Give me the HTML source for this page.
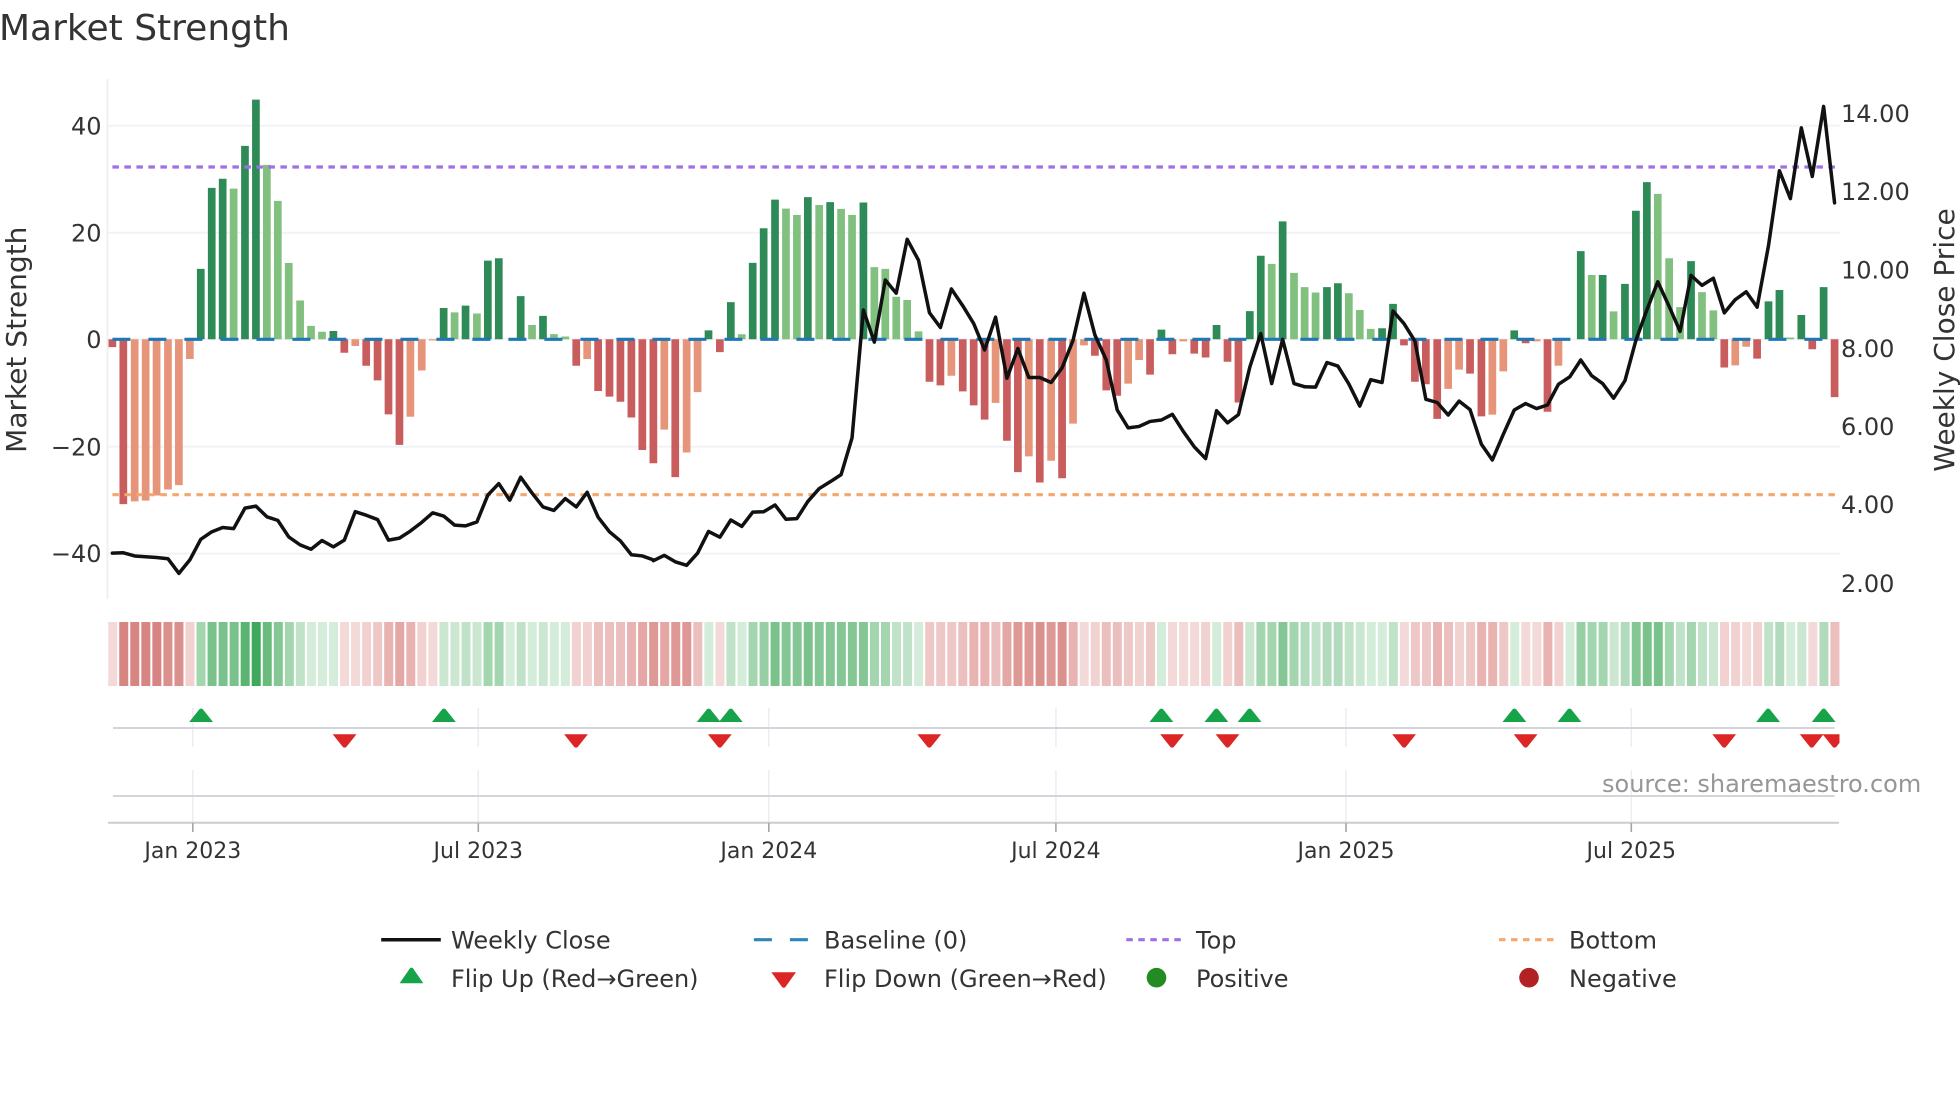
<!DOCTYPE html>
<html><head><meta charset="utf-8"><title>Market Strength</title>
<style>html,body{margin:0;padding:0;background:#fff;width:1960px;height:1102px;overflow:hidden}svg{display:block}text{font-family:"DejaVu Sans","Liberation Sans",sans-serif;fill:#333}</style>
</head><body>
<svg width="1960" height="1102" viewBox="0 0 1960 1102" xmlns="http://www.w3.org/2000/svg">
<defs>
<clipPath id="c"><rect x="100" y="600" width="1739.5" height="200"/></clipPath>
<path id="u" d="M-11.9 13.3L-1.7.6Q0-.7 1.7.6L11.9 13.3z" fill="#16a34a"/>
<path id="d" d="M-11.9 0L-1.7 12.7Q0 14 1.7 12.7L11.9 0z" fill="#dc2626"/>
</defs>
<rect width="1960" height="1102" fill="#fff"/>
<text x="-1" y="40" font-size="36">Market Strength</text>

<!-- grid -->
<g stroke="#f1f3f8" stroke-width="2" fill="none">
<path d="M107.5 125.7H1840M107.5 232.7H1840M107.5 446.7H1840M107.5 553.6H1840M107.5 339.3H1840"/>
<path d="M107.5 79V599" stroke="#eef0f4"/>
</g>
<g stroke="#eceef4" stroke-width="1.6" fill="none">
<path d="M192.8 708V747M192.8 770V823M478.3 708V747M478.3 770V823M768.8 708V747M768.8 770V823M1055.9 708V747M1055.9 770V823M1346 708V747M1346 770V823M1631.3 708V747M1631.3 770V823"/>
</g>

<!-- bars -->
<g fill="none" stroke-width="18.3">
<g transform="scale(.42092,.39541)">
<path stroke="#2e8b57" d="M477 858V680M503 858V475M529 858V452M582 858V369M608 858V252M792 858V837M1054 858V779M1106 858V773M1159 858V659M1185 858V653M1237 858V749M1290 858V799"/>
<path stroke="#81c07f" d="M555 858V477M634 858V417M660 858V508M686 858V665M713 858V760M739 858V824M765 858V839M1080 858V790M1133 858V793M1264 858V822M1316 858V845M1343 858V851"/>
<path stroke="#c95c5c" d="M267 858V878M293 858V1275M818 858V892M870 858V925M897 858V962M923 858V1048M949 858V1125M1369 858V925M1421 858V989M1448 858V1003M1474 858V1016M1500 858V1056M1526 858V1138"/>
<path stroke="#e6957a" d="M320 858V1268M346 858V1266M372 858V1253M399 858V1238M425 858V1227M451 858V908M844 858V875M975 858V1054M1002 858V937M1028 858V861M1395 858V908"/>
</g>
<g transform="translate(650,60) scale(.42092,.35714)">
<path stroke="#2e8b57" d="M139 782V757M192 782V678M244 782V568M270 782V471M297 782V391M375 782V384M428 782V398M507 782V399M1215 782V755M1346 782V742M1425 782V703M1451 782V548M1503 782V452"/>
<path stroke="#81c07f" d="M218 782V768M323 782V416M349 782V434M402 782V406M454 782V417M480 782V434M533 782V580M559 782V585M585 782V663M611 782V672M638 782V760M1477 782V571M1530 782V596"/>
<path stroke="#c95c5c" d="M8 782V1129M60 782V1168M166 782V818M664 782V901M690 782V911M743 782V928M769 782V967M795 782V1007M848 782V1066M874 782V1154M926 782V1183M979 782V1171M1057 782V828M1084 782V925M1110 782V940M1188 782V881M1241 782V824M1293 782V822M1320 782V833M1372 782V845M1398 782V959"/>
<path stroke="#e6957a" d="M34 782V1035M87 782V1099M113 782V930M716 782V884M821 782V960M900 782V1110M953 782V1122M1005 782V1018M1031 782V799M1136 782V906M1162 782V840M1267 782V788"/>
</g>
<g transform="translate(1300,60) scale(.42092,.35714)">
<path stroke="#2e8b57" d="M64 782V636M90 782V625M195 782V751M221 782V683M509 782V757M667 782V535M719 782V602M772 782V627M798 782V422M824 782V342M929 782V563M1113 782V676M1139 782V644M1191 782V714M1244 782V636"/>
<path stroke="#81c07f" d="M11 782V636M37 782V651M116 782V653M142 782V700M168 782V753M693 782V602M745 782V704M850 782V375M877 782V555M903 782V692M955 782V650M982 782V701M1165 782V777"/>
<path stroke="#c95c5c" d="M247 782V799M273 782V901M299 782V908M326 782V1005M404 782V878M431 782V998M536 782V793M588 782V985M1008 782V861M1086 782V836M1217 782V810M1270 782V944"/>
<path stroke="#e6957a" d="M352 782V921M378 782V867M457 782V993M483 782V872M562 782V788M614 782V856M1034 782V855M1060 782V803"/>
</g>
</g>

<!-- reference lines -->
<path d="M112.4 339.3H1835" stroke="#1f77b4" stroke-width="3.2" stroke-dasharray="18 18" fill="none"/>
<path d="M112.4 167H1835" stroke="#a06ee6" stroke-width="3.2" stroke-dasharray="6.5 5.5" fill="none"/>
<path d="M112.4 494.7H1835" stroke="#f4a86e" stroke-width="3.2" stroke-dasharray="6.5 5.5" fill="none"/>

<!-- weekly close line -->
<g fill="none" stroke="#111" stroke-width="3.5" stroke-linejoin="round" stroke-linecap="round">
<path vector-effect="non-scaling-stroke" transform="scale(.42092,.39541)" d="M267 1399L293 1398L320 1406L346 1408L372 1410L399 1413L425 1450L451 1416L477 1364L503 1345L529 1334L555 1337L582 1285L608 1280L634 1307L660 1316L686 1358L713 1378L739 1389L765 1367L792 1383L818 1366L844 1294L870 1303L897 1314L923 1366L949 1361L975 1343L1002 1321L1028 1297L1054 1305L1080 1328L1106 1330L1133 1320L1159 1252L1185 1223L1211 1265L1237 1207L1264 1247L1290 1282L1316 1291L1343 1261L1369 1282L1395 1245L1421 1308L1448 1345L1474 1368L1500 1403L1526 1406L1552 1416"/>
<path vector-effect="non-scaling-stroke" transform="translate(650,60) scale(.42092,.35714)" d="M8 1402L34 1387L60 1405L87 1415L113 1381L139 1320L166 1336L192 1288L218 1306L244 1266L270 1265L297 1246L323 1286L349 1284L375 1236L402 1200L428 1181L454 1161L480 1058L507 700L533 790L559 616L585 653L611 502L638 561L664 708L690 749L716 641L743 688L769 738L795 812L821 720L848 891L874 808L900 889L926 889L953 903L979 862L1005 785L1031 653L1057 770L1084 840L1110 980L1136 1030L1162 1026L1188 1012L1215 1008L1241 992L1267 1040L1293 1083L1320 1116L1346 982L1372 1016L1398 993L1425 860L1451 766L1477 906L1503 782L1530 906L1556 915"/>
<path vector-effect="non-scaling-stroke" transform="translate(1300,60) scale(.42092,.35714)" d="M11 915L37 916L64 847L90 857L116 907L142 969L168 895L195 903L221 703L247 738L273 787L299 950L326 959L352 994L378 955L404 979L431 1076L457 1120L483 1048L509 980L536 962L562 976L588 966L614 908L641 887L667 840L693 884L719 906L745 947L772 898L798 785L824 700L850 621L877 690L903 760L929 603L955 631L982 611L1008 708L1034 671L1060 649L1086 692L1113 520L1139 310L1165 388L1191 190L1217 326L1244 130L1270 400"/>
</g>

<!-- heat strip -->
<g transform="translate(112.7,0) scale(11.04,1)" stroke-width=".815" fill="none">
<path stroke="#d4ecda" d="M18 622v64M19 622v64M20 622v64M36 622v64M38 622v64M40 622v64M41 622v64M54 622v64M57 622v64M73 622v64M95 622v64M100 622v64M114 622v64M115 622v64M127 622v64M132 622v64M152 622v64"/>
<path stroke="#cbe7d2" d="M30 622v64M31 622v64M33 622v64M39 622v64M103 622v64M113 622v64M136 622v64M145 622v64M153 622v64"/>
<path stroke="#bfe2c8" d="M17 622v64M32 622v64M37 622v64M56 622v64M71 622v64M72 622v64M109 622v64M112 622v64M116 622v64M142 622v64M144 622v64M150 622v64"/>
<path stroke="#b2dbbd" d="M108 622v64M110 622v64M111 622v64M137 622v64M151 622v64M155 622v64"/>
<path stroke="#a3d5ae" d="M8 622v64M16 622v64M34 622v64M35 622v64M58 622v64M69 622v64M70 622v64M104 622v64M105 622v64M107 622v64M134 622v64M135 622v64M141 622v64M143 622v64"/>
<path stroke="#95cfa3" d="M59 622v64M133 622v64"/>
<path stroke="#84c795" d="M15 622v64M61 622v64M62 622v64M64 622v64M65 622v64M66 622v64M67 622v64M68 622v64M106 622v64M138 622v64"/>
<path stroke="#7ac28c" d="M9 622v64M10 622v64M11 622v64M60 622v64M63 622v64M139 622v64M140 622v64"/>
<path stroke="#6bbb7e" d="M14 622v64"/>
<path stroke="#5cb473" d="M12 622v64"/>
<path stroke="#3ea85b" d="M13 622v64"/>
<path stroke="#f4d9d9" d="M0 622v64M21 622v64M22 622v64M29 622v64M55 622v64M88 622v64M96 622v64M97 622v64M98 622v64M117 622v64M128 622v64M129 622v64M148 622v64M154 622v64"/>
<path stroke="#f2d1d1" d="M7 622v64M23 622v64M28 622v64M42 622v64M43 622v64M89 622v64M93 622v64M99 622v64M101 622v64M122 622v64M131 622v64M146 622v64M147 622v64M149 622v64"/>
<path stroke="#eec8c7" d="M24 622v64M74 622v64M75 622v64M76 622v64M92 622v64M94 622v64M118 622v64M119 622v64M123 622v64M126 622v64"/>
<path stroke="#ebbfbe" d="M44 622v64M45 622v64M46 622v64M53 622v64M77 622v64M80 622v64M90 622v64M91 622v64M102 622v64M121 622v64M156 622v64"/>
<path stroke="#e8b3b1" d="M25 622v64M27 622v64M47 622v64M78 622v64M79 622v64M87 622v64M120 622v64M124 622v64M125 622v64M130 622v64"/>
<path stroke="#e4a7a5" d="M26 622v64M48 622v64M50 622v64M81 622v64"/>
<path stroke="#de9996" d="M49 622v64M51 622v64M52 622v64M82 622v64M83 622v64M85 622v64"/>
<path stroke="#da908d" d="M5 622v64M6 622v64M84 622v64M86 622v64"/>
<path stroke="#d68583" d="M1 622v64M2 622v64M3 622v64M4 622v64"/>
</g>

<!-- flip rows -->
<path d="M113 728H1834.5M113 796H1834.5" stroke="#d3d5da" stroke-width="2" fill="none"/>
<path d="M108 822.7H1839" stroke="#ccc" stroke-width="2" fill="none"/>
<path d="M192.8 823V832M478.3 823V832M768.8 823V832M1055.9 823V832M1346 823V832M1631.3 823V832" stroke="#a5a5a5" stroke-width="1.6" fill="none"/>
<g clip-path="url(#c)">
<use href="#u" x="201.1" y="708.7"/><use href="#u" x="443.9" y="708.7"/><use href="#u" x="708.7" y="708.7"/><use href="#u" x="730.8" y="708.7"/><use href="#u" x="1161.4" y="708.7"/><use href="#u" x="1216.4" y="708.7"/><use href="#u" x="1249.6" y="708.7"/><use href="#u" x="1514.4" y="708.7"/><use href="#u" x="1569.5" y="708.7"/><use href="#u" x="1768.1" y="708.7"/><use href="#u" x="1823.7" y="708.7"/>
<use href="#d" x="344.6" y="734.3"/><use href="#d" x="576" y="734.3"/><use href="#d" x="719.8" y="734.3"/><use href="#d" x="929.3" y="734.3"/><use href="#d" x="1172.1" y="734.3"/><use href="#d" x="1227.5" y="734.3"/><use href="#d" x="1404.1" y="734.3"/><use href="#d" x="1525.6" y="734.3"/><use href="#d" x="1724.2" y="734.3"/><use href="#d" x="1811.7" y="734.3"/><use href="#d" x="1834.5" y="734.3"/>
</g>

<!-- axes text -->
<g font-size="24">
<g text-anchor="end">
<text x="101.5" y="134.4">40</text><text x="101.5" y="241.4">20</text><text x="101.5" y="348">0</text><text x="101.5" y="455.3">−20</text><text x="101.5" y="562.2">−40</text>
</g>
<text x="1841" y="121.8">14.00</text><text x="1841" y="199.8">12.00</text><text x="1841" y="278.6">10.00</text><text x="1841" y="356.8">8.00</text><text x="1841" y="435">6.00</text><text x="1841" y="513.2">4.00</text><text x="1841" y="592">2.00</text>
</g>
<text transform="translate(25.8,339.7) rotate(-90)" text-anchor="middle" font-size="28">Market Strength</text>
<text transform="translate(1954,340) rotate(-90)" text-anchor="middle" font-size="28">Weekly Close Price</text>
<g font-size="22" text-anchor="middle">
<text x="192.8" y="858">Jan 2023</text><text x="478.3" y="858">Jul 2023</text><text x="768.8" y="858">Jan 2024</text><text x="1055.9" y="858">Jul 2024</text><text x="1346" y="858">Jan 2025</text><text x="1631.3" y="858">Jul 2025</text>
</g>
<text x="1602" y="792" font-size="24" style="fill:#969696">source: sharemaestro.com</text>

<!-- legend -->
<path d="M381.2 939.7H440.8" stroke="#111" stroke-width="3.5" fill="none"/>
<path d="M753.9 939.7H808.2" stroke="#2f86bb" stroke-width="3.2" stroke-dasharray="18 18" fill="none"/>
<path d="M1126.3 939.7H1181" stroke="#a06ee6" stroke-width="3.2" stroke-dasharray="6.5 5.5" fill="none"/>
<path d="M1499 939.7H1553.6" stroke="#f4a86e" stroke-width="3.2" stroke-dasharray="6.5 5.5" fill="none"/>
<path d="M399.6 983.3L410 968.3Q411.5 966.9 413 968.3L423.3 983.3z" fill="#16a34a"/>
<path d="M771.4 972.3L782 987Q783.7 988.6 785.4 987L796 972.3z" fill="#dc2626"/>
<circle cx="1156.5" cy="977.7" r="9.8" fill="#228b22"/>
<circle cx="1529" cy="977.7" r="9.8" fill="#b22222"/>
<g font-size="24">
<text x="451" y="948.7">Weekly Close</text>
<text x="824" y="948.7">Baseline (0)</text>
<text x="1196" y="948.7">Top</text>
<text x="1569" y="948.7">Bottom</text>
<text x="451" y="987">Flip Up (Red→Green)</text>
<text x="824" y="987">Flip Down (Green→Red)</text>
<text x="1196" y="987">Positive</text>
<text x="1569" y="987">Negative</text>
</g>
</svg>
</body></html>
